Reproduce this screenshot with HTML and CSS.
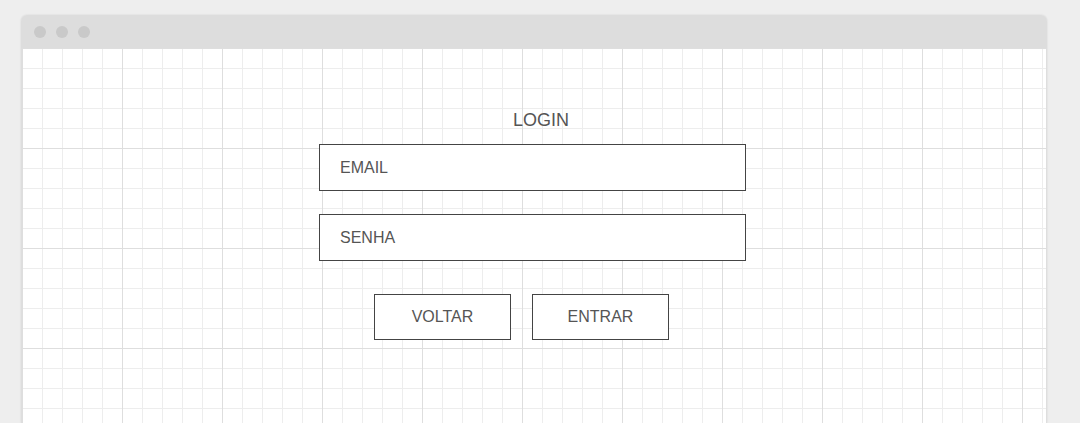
FILE: index.html
```html
<!DOCTYPE html>
<html lang="pt">
<head>
<meta charset="utf-8">
<title>Login</title>
<link rel="stylesheet" href="styles.css">
</head>
<body>
<div class="window">
  <div class="titlebar">
    <span class="dot"></span><span class="dot"></span><span class="dot"></span>
  </div>
  <div class="canvas">
    <div class="form">
      <div class="title">LOGIN</div>
      <div class="field">EMAIL</div>
      <div class="field field-gap">SENHA</div>
      <div class="actions">
        <div class="btn">VOLTAR</div>
        <div class="btn">ENTRAR</div>
      </div>
    </div>
  </div>
</div>
</body>
</html>
```

FILE: styles.css
```css
html, body {
  margin: 0;
  padding: 0;
  background: #eeeeee;
  overflow: hidden;
  font-family: "Liberation Sans", Arial, sans-serif;
}
.window {
  margin: 15px 0 0 21px;
  width: 1026px;
  height: calc(100vh - 15px);
  border-radius: 6px 6px 0 0;
  box-shadow: 0 0 2px rgba(0,0,0,0.12);
  overflow: hidden;
  display: flex;
  flex-direction: column;
}
.titlebar {
  height: 33px;
  background: #dddddd;
  display: flex;
  align-items: center;
  gap: 10px;
  padding-left: 13px;
  flex: none;
}
.dot {
  width: 12px;
  height: 12px;
  border-radius: 50%;
  background: #c9c9c9;
}
.canvas {
  flex: 1;
  border-left: 1px solid #dedede;
  border-right: 1px solid #dedede;
  background-color: #ffffff;
  background-image:
    linear-gradient(to right, #dedede 1px, transparent 1px),
    linear-gradient(to bottom, #dedede 1px, transparent 1px),
    linear-gradient(to right, #ededed 1px, transparent 1px),
    linear-gradient(to bottom, #ededed 1px, transparent 1px);
  background-size: 100px 100px, 100px 100px, 20px 20px, 20px 20px;
  background-position: 0 0;
  padding: 61px 0 0 297px;
}
.form {
  width: 427px;
  display: flex;
  flex-direction: column;
  color: #555555;
}
.title {
  font-size: 18px;
  line-height: 22px;
  margin-left: 194px;
  margin-bottom: 13px;
}
.field {
  height: 45px;
  border: 1px solid #444444;
  background: #ffffff;
  display: flex;
  align-items: center;
  padding-left: 20px;
  font-size: 16px;
}
.field-gap {
  margin-top: 23px;
}
.actions {
  display: flex;
  gap: 21px;
  margin: 33px 0 0 55px;
}
.btn {
  width: 135px;
  height: 44px;
  border: 1px solid #444444;
  background: #ffffff;
  display: flex;
  align-items: center;
  justify-content: center;
  font-size: 16px;
}
```
